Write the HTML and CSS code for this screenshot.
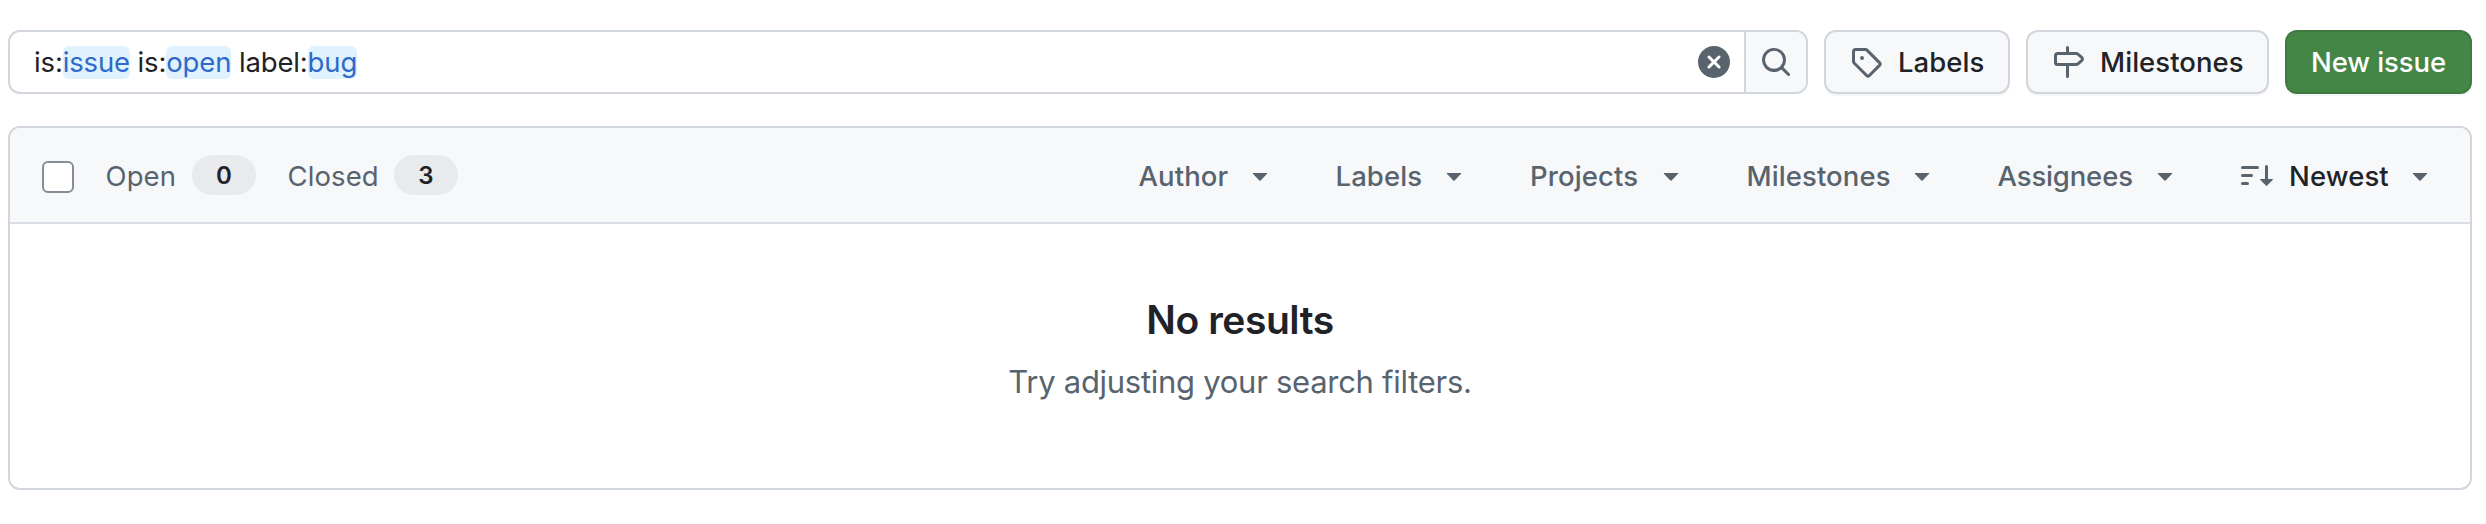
FILE: index.html
```html
<!DOCTYPE html>
<html lang="en">
<head>
<meta charset="utf-8">
<title>Issues</title>
<link rel="stylesheet" href="styles.css">
</head>
<body>
<svg width="0" height="0" class="defs" aria-hidden="true">
  <symbol id="caret" viewBox="0 0 16 16"><path d="m4.427 7.427 3.396 3.396a.25.25 0 0 0 .354 0l3.396-3.396A.25.25 0 0 0 11.396 7H4.604a.25.25 0 0 0-.177.427Z"/></symbol>
</svg>
<main class="page">
  <div class="toolbar">
    <div class="search">
      <div class="query"><span>is:</span><span class="token">issue</span><span class="qualifier">is:</span><span class="token">open</span><span class="qualifier">label:</span><span class="token">bug</span></div>
      <svg class="icon clear" viewBox="0 0 16 16"><path d="M2.343 13.657A8 8 0 1 1 13.658 2.343 8 8 0 0 1 2.343 13.657ZM6.03 4.97a.751.751 0 0 0-1.042.018.751.751 0 0 0-.018 1.042L6.94 8 4.97 9.97a.749.749 0 0 0 .326 1.275.749.749 0 0 0 .734-.215L8 9.06l1.97 1.97a.749.749 0 0 0 1.275-.326.749.749 0 0 0-.215-.734L9.06 8l1.97-1.97a.749.749 0 0 0-.326-1.275.749.749 0 0 0-.734.215L8 6.94Z"/></svg>
      <button class="search-btn" aria-label="Search"><svg class="icon" viewBox="0 0 16 16"><path d="M10.68 11.74a6 6 0 0 1-7.922-8.982 6 6 0 0 1 8.982 7.922l3.04 3.04a.749.749 0 0 1-.326 1.275.749.749 0 0 1-.734-.215ZM11.5 7a4.499 4.499 0 1 0-8.997 0A4.499 4.499 0 0 0 11.5 7Z"/></svg></button>
    </div>
    <a class="btn btn-labels"><svg class="icon" viewBox="0 0 16 16"><path d="M1 7.775V2.75C1 1.784 1.784 1 2.75 1h5.025c.464 0 .91.184 1.238.513l6.25 6.25a1.75 1.75 0 0 1 0 2.474l-5.026 5.026a1.75 1.75 0 0 1-2.474 0l-6.25-6.25A1.752 1.752 0 0 1 1 7.775Zm1.5 0c0 .066.026.13.073.177l6.25 6.25a.25.25 0 0 0 .354 0l5.025-5.025a.25.25 0 0 0 0-.354l-6.25-6.25a.25.25 0 0 0-.177-.073H2.75a.25.25 0 0 0-.25.25ZM6 5a1 1 0 1 1 0 2 1 1 0 0 1 0-2Z"/></svg><span>Labels</span></a>
    <a class="btn btn-milestones"><svg class="icon" viewBox="0 0 16 16"><path d="M7.75 0a.75.75 0 0 1 .75.75V3h3.634c.414 0 .814.147 1.13.414l2.07 1.75a1.75 1.75 0 0 1 0 2.672l-2.07 1.75a1.75 1.75 0 0 1-1.13.414H8.5v5.25a.75.75 0 0 1-1.5 0V10H2.75A1.75 1.75 0 0 1 1 8.25v-3.5C1 3.784 1.784 3 2.75 3H7V.75A.75.75 0 0 1 7.75 0Zm4.384 8.5a.25.25 0 0 0 .161-.06l2.07-1.75a.248.248 0 0 0 0-.38l-2.07-1.75a.25.25 0 0 0-.161-.06H2.75a.25.25 0 0 0-.25.25v3.5c0 .138.112.25.25.25h9.384Z"/></svg><span>Milestones</span></a>
    <a class="btn btn-new"><span>New issue</span></a>
  </div>
  <section class="list">
    <header class="list-head">
      <span class="checkbox"></span>
      <span class="state open">Open</span><span class="count">0</span>
      <span class="state closed">Closed</span><span class="count">3</span>
      <nav class="filters">
        <span class="filter author"><span>Author</span><svg class="icon"><use href="#caret"/></svg></span>
        <span class="filter labels"><span>Labels</span><svg class="icon"><use href="#caret"/></svg></span>
        <span class="filter projects"><span>Projects</span><svg class="icon"><use href="#caret"/></svg></span>
        <span class="filter milestones"><span>Milestones</span><svg class="icon"><use href="#caret"/></svg></span>
        <span class="filter assignees"><span>Assignees</span><svg class="icon"><use href="#caret"/></svg></span>
        <span class="filter sort"><svg class="icon" viewBox="0 0 16 16"><path d="M0 4.25a.75.75 0 0 1 .75-.75h7.5a.75.75 0 0 1 0 1.5H.75A.75.75 0 0 1 0 4.25Zm0 4a.75.75 0 0 1 .75-.75h4.5a.75.75 0 0 1 0 1.5H.75A.75.75 0 0 1 0 8.25Zm0 4a.75.75 0 0 1 .75-.75h2.5a.75.75 0 0 1 0 1.5H.75a.75.75 0 0 1-.75-.75ZM13.5 10h2.25a.25.25 0 0 1 .177.427l-3 3a.25.25 0 0 1-.354 0l-3-3A.25.25 0 0 1 9.75 10H12V3.75a.75.75 0 0 1 1.5 0V10Z"/></svg><span class="sort-text">Newest</span><svg class="icon"><use href="#caret"/></svg></span>
      </nav>
    </header>
    <div class="blank">
      <h2>No results</h2>
      <p>Try adjusting your search filters.</p>
    </div>
  </section>
</main>
</body>
</html>
```
FILE: styles.css
```css
* {
  box-sizing: border-box;
}

body {
  margin: 0;
  background: #fff;
  color: #1f2328;
  font: 27.5px/40px Inter, "Liberation Sans", sans-serif;
}

.defs {
  display: none;
}

.page {
  padding: 30px 14px 0 8px;
}

.icon {
  display: block;
  flex: none;
  width: 32px;
  height: 32px;
  fill: #59636e;
}

/* Search and actions */
.toolbar {
  display: flex;
  gap: 16px;
  height: 64px;
}

.search {
  display: flex;
  align-items: center;
  width: 1800px;
  border: 2px solid #d1d5dc;
  border-radius: 12px;
  overflow: hidden;
}

.query {
  display: flex;
  flex: 1;
  align-items: center;
  padding-left: 24px;
  letter-spacing: -.15px;
}

.token {
  height: 33px;
  line-height: 33px;
  border-radius: 6px;
  background: #dff2fe;
  color: #2f69c9;
}

.qualifier {
  margin-left: 7.7px;
}

.clear {
  margin-right: 14px;
}

.search-btn {
  display: flex;
  align-items: center;
  justify-content: center;
  width: 62px;
  height: 60px;
  padding: 0;
  border: 0;
  border-left: 2px solid #d1d5dc;
  background: #f6f8fa;
}

.btn {
  display: flex;
  align-items: center;
  gap: 16px;
  padding: 0 0 0 24px;
  border: 2px solid #d1d5dc;
  border-radius: 12px;
  background: #f6f8fa;
  box-shadow: 0 2px 0 rgba(31, 35, 40, .04);
  font-weight: 500;
  letter-spacing: .05px;
  white-space: nowrap;
}

.btn-labels {
  width: 186px;
}

.btn-milestones {
  width: 243px;
}

.btn-new {
  justify-content: center;
  width: 187px;
  padding: 0;
  border-color: #3e7a40;
  background: #438646;
  color: #fff;
  letter-spacing: -.1px;
}

/* Issue list */
.list {
  height: 364px;
  margin-top: 32px;
  border: 2px solid #d1d5dc;
  border-radius: 12px;
  overflow: hidden;
}

.list-head {
  display: flex;
  align-items: center;
  height: 96px;
  padding: 0 34px 0 32px;
  border-bottom: 2px solid #dadee4;
  background: #f6f8fa;
}

.checkbox {
  width: 32px;
  height: 32px;
  margin-top: 4px;
  border: 2px solid #868d97;
  border-radius: 6px;
  background: #fff;
}

.state {
  margin-left: 31px;
  padding: 2px 0 0 .5px;
  color: #59636e;
  letter-spacing: .1px;
}

.open {
  width: 87px;
}

.closed {
  width: 107px;
}

.count {
  width: 64px;
  height: 40px;
  border-radius: 20px;
  background: #e8eaee;
  font-size: 24px;
  font-weight: 600;
  line-height: 41px;
  text-align: center;
}

.filters {
  display: flex;
  gap: 59px;
  margin-left: auto;
  color: #59636e;
  font-weight: 500;
  letter-spacing: .1px;
}

.filter {
  display: flex;
  align-items: center;
  justify-content: space-between;
}

.filter > span {
  padding-top: 2px;
}

.author {
  width: 137.5px;
}

.labels {
  width: 134.5px;
}

.projects {
  width: 157px;
}

.milestones {
  width: 191.5px;
}

.filters .author,
.filters .labels,
.filters .milestones {
  margin-left: .5px;
}

.filters .projects {
  margin-left: 1px;
}

.assignees {
  width: 183.5px;
  margin-left: .5px;
  letter-spacing: -.15px;
}

.sort {
  width: 195px;
  margin-left: 1px;
}

.filter .sort-text {
  margin-right: auto;
  padding-left: 16px;
  color: #1f2328;
}

/* Empty state */
.blank {
  padding-top: 72px;
  text-align: center;
}

.blank h2 {
  margin: 0;
  font-size: 39px;
  font-weight: 600;
  line-height: 48px;
  letter-spacing: -.45px;
}

.blank p {
  margin: 14px 0 0;
  color: #59636e;
  font-size: 31px;
  line-height: 48px;
  letter-spacing: -.28px;
}
```
